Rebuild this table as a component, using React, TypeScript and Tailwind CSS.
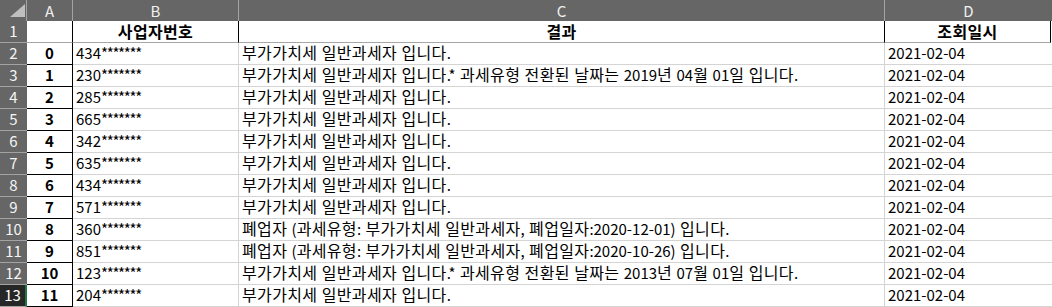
import React from "react";

const base = "부가가치세 일반과세자 입니다.";
const rows: [number, string, string][] = [
  [0, "434*******", base],
  [1, "230*******", "부가가치세 일반과세자 입니다.* 과세유형 전환된 날짜는 2019년 04월 01일 입니다."],
  [2, "285*******", base],
  [3, "665*******", base],
  [4, "342*******", base],
  [5, "635*******", base],
  [6, "434*******", base],
  [7, "571*******", base],
  [8, "360*******", "폐업자 (과세유형: 부가가치세 일반과세자, 폐업일자:2020-12-01) 입니다."],
  [9, "851*******", "폐업자 (과세유형: 부가가치세 일반과세자, 폐업일자:2020-10-26) 입니다."],
  [10, "123*******", "부가가치세 일반과세자 입니다.* 과세유형 전환된 날짜는 2013년 07월 01일 입니다."],
  [11, "204*******", base],
];

const font = { fontFamily: '"Noto Sans CJK KR", "Noto Sans", sans-serif' };

function K({ text }: { text: string }) {
  const parts = text.split(/([\uAC00-\uD7A3]+)/);
  return (
    <>
      {parts.map((p, i) =>
        /[\uAC00-\uD7A3]/.test(p) ? (
          <span key={i} className="text-[16px] tracking-[0.35px]">
            {p}
          </span>
        ) : (
          <span key={i} className="[word-spacing:1px]">{p}</span>
        )
      )}
    </>
  );
}

export default function App() {
  return (
    <div
      className="w-[1052px] h-[307px] overflow-hidden bg-white text-[15px] leading-[18px] text-black"
      style={font}
    >
      {/* column header */}
      <div className="flex h-[21px] bg-[#666666] text-[#f0f0f0]">
        <div className="w-[27px] shrink-0 border-r border-[#a3a3a3] relative">
          <svg className="absolute left-[9px] top-[4px]" width="17" height="14" viewBox="0 0 17 14">
            <polygon points="16,0 16,13 1,13" fill="#bfbfbf" />
          </svg>
        </div>
        <div className="w-[46px] shrink-0 border-r border-[#a3a3a3] flex justify-center pt-[2px]">A</div>
        <div className="w-[166px] shrink-0 border-r border-[#a3a3a3] flex justify-center pt-[2px]">B</div>
        <div className="w-[646px] shrink-0 border-r border-[#a3a3a3] flex justify-center pt-[2px]">C</div>
        <div className="w-[167px] shrink-0 flex justify-center pt-[2px]">D</div>
      </div>

      {/* row 1 */}
      <div className="flex h-[22px]">
        <div className="w-[27px] shrink-0 bg-[#666666] text-[#f5f5f5] border-b border-[#a3a3a3] flex justify-center pt-[1px]">1</div>
        <div className="w-[46px] shrink-0 border-r border-b border-r-black border-b-[#a6a6a6]"></div>
        <div className="w-[166px] shrink-0 border-r border-b border-r-black border-b-[#a6a6a6] flex justify-center items-end pb-[2px] font-bold whitespace-nowrap">
          <K text="사업자번호" />
        </div>
        <div className="w-[646px] shrink-0 border-r border-b border-r-black border-b-[#a6a6a6] flex justify-center items-end pb-[2px] font-bold">
          <K text="결과" />
        </div>
        <div className="w-[166px] shrink-0 border-r border-b border-r-black border-b-[#a6a6a6] flex justify-center items-end pb-[2px] font-bold whitespace-nowrap">
          <K text="조회일시" />
        </div>
      </div>

      {rows.map(([idx, biz, result], i) => {
        const last = i === rows.length - 1;
        return (
          <div key={idx} className="flex h-[22px]">
            <div
              className={
                last
                  ? "w-[27px] shrink-0 bg-[#262626] text-white border-b border-r-2 border-b-[#a3a3a3] border-r-[#217346] flex justify-center pt-[1px]"
                  : "w-[27px] shrink-0 bg-[#666666] text-[#f5f5f5] border-b border-[#a3a3a3] flex justify-center pt-[1px]"
              }
            >
              {i + 2}
            </div>
            <div className="w-[46px] shrink-0 border-r border-b border-black flex justify-center pt-[1px] font-bold">{idx}</div>
            <div className="w-[166px] shrink-0 border-r border-b border-[#d4d4d4] pl-[3px] pt-[1px] whitespace-nowrap">
              {biz.slice(0, 3)}
              <span className="tracking-[-1.3px]">{biz.slice(3)}</span>
            </div>
            <div className="w-[646px] shrink-0 border-r border-b border-[#d4d4d4] pl-[3px] flex items-end pb-[2px] whitespace-nowrap">
              <span>
                <K text={result} />
              </span>
            </div>
            <div className="w-[167px] shrink-0 border-b border-[#d4d4d4] pl-[3px] pt-[1px] whitespace-nowrap">2021-02-04</div>
          </div>
        );
      })}
    </div>
  );
}
